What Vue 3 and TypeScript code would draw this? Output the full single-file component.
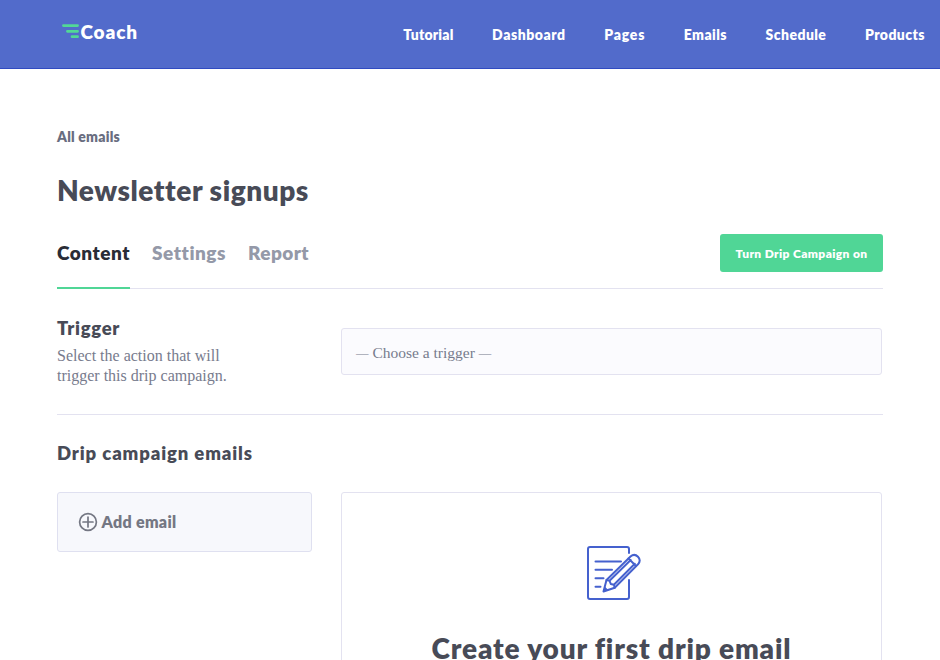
<script setup lang="ts">
import { ref } from 'vue'

interface Item {
  label: string
  key: string
}

const navItems: Item[] = [
  { label: 'Tutorial', key: 'tutorial' },
  { label: 'Dashboard', key: 'dashboard' },
  { label: 'Pages', key: 'pages' },
  { label: 'Emails', key: 'emails' },
  { label: 'Schedule', key: 'schedule' },
  { label: 'Products', key: 'products' },
]

const tabs: Item[] = [
  { label: 'Content', key: 'content' },
  { label: 'Settings', key: 'settings' },
  { label: 'Report', key: 'report' },
]

const activeTab = ref('content')
</script>

<template>
  <div class="page">
    <header class="header">
      <a class="logo">
        <svg class="logo-mark" width="17" height="15" viewBox="0 0 17 15">
          <path d="M1.4 1.6H15.6M5.4 7.3H15.6M10 12.7H15.6" />
        </svg>
        <span>Coach</span>
      </a>
      <nav class="nav">
        <a v-for="item in navItems" :key="item.key" class="nav-link" :class="'nav-' + item.key">{{ item.label }}</a>
      </nav>
    </header>

    <main class="main">
      <a class="back">All emails</a>
      <h1 class="title">Newsletter signups</h1>

      <div class="tab-row">
        <div class="tabs">
          <button
            v-for="tab in tabs"
            :key="tab.key"
            class="tab"
            :class="['tab-' + tab.key, { active: tab.key === activeTab }]"
            @click="activeTab = tab.key"
          >{{ tab.label }}</button>
        </div>
        <button class="cta">Turn Drip Campaign on</button>
      </div>

      <section class="trigger">
        <div class="trigger-info">
          <h2 class="heading trigger-heading">Trigger</h2>
          <p class="description">Select the action that will<br />trigger this drip campaign.</p>
        </div>
        <div class="select"><span class="dash">—</span> Choose a trigger <span class="dash">—</span></div>
      </section>

      <h2 class="heading emails-heading">Drip campaign emails</h2>

      <section class="emails">
        <button class="add">
          <svg width="20" height="20" viewBox="0 0 20 20">
            <circle cx="10" cy="10" r="8.4" />
            <path d="M10 5V15M5 10H15" />
          </svg>
          <span>Add email</span>
        </button>
        <div class="empty">
          <svg class="empty-icon" width="56" height="56" viewBox="0 0 56 56">
            <path d="M43 8V4Q43 2 41 2H4Q2 2 2 4V52Q2 54 4 54H41Q43 54 43 52V35" />
            <path d="M9.5 16.5H35M9.5 24.8H26M9.5 33.2H17.5M9.5 41.8H14.5" />
            <path d="M17.5 46.5L20.5 35L44.5 11.5Q48.5 8.1 52 11.8Q55.4 15.5 52 19.3L28.7 42.7L17.5 46.5Z" />
            <path d="M20.5 35L23.5 35.7L24.8 39L27.9 39.8L28.7 42.7M23.5 35.7L44.7 15M27.9 39.8L48.8 18.8M42.5 13.5L50 21" />
            <path class="tip" d="M17.5 46.5L18.7 41.6L22.4 45Z" />
          </svg>
          <h2 class="empty-title">Create your first drip email</h2>
        </div>
      </section>
    </main>
  </div>
</template>

<style>
body {
  margin: 0;
  overflow: hidden;
}
</style>

<style scoped>
.page {
  width: 940px;
  height: 660px;
  overflow: hidden;
  background: #fff;
  color: #484b57;
  font-family: Lato, sans-serif;
  font-weight: 800;
  font-variant-ligatures: none;
}
h1,
h2,
p {
  margin: 0;
}
button {
  font: inherit;
  font-variant-ligatures: none;
  border: 0;
  padding: 0;
  background: none;
}
span,
a,
h1,
h2,
p,
button {
  white-space: nowrap;
}
.header {
  box-sizing: border-box;
  height: 69px;
  padding: 0 15px 0 62px;
  display: flex;
  justify-content: space-between;
  background: #526bcb;
  border-bottom: 1px solid #304bc1;
  color: #fff;
}
.logo {
  display: flex;
  align-items: flex-start;
  gap: 1.5px;
  padding-top: 19px;
  font-size: 19px;
  line-height: 25px;
  letter-spacing: 0.85px;
}
.logo-mark {
  margin-top: 5px;
  fill: none;
  stroke: #52d896;
  stroke-width: 2.7;
  stroke-linecap: round;
}
.nav {
  display: flex;
  gap: 38.6px;
  padding-top: 26px;
  font-size: 14px;
  line-height: 18px;
  letter-spacing: 0.43px;
}
.nav-tutorial {
  letter-spacing: 0.2px;
}
.nav-dashboard {
  letter-spacing: 0.55px;
}
.nav-pages {
  letter-spacing: 0.75px;
}
.main {
  padding: 59px 57px 0;
}
.back {
  display: block;
  font-size: 14px;
  line-height: 18px;
  letter-spacing: 0.22px;
  color: #696d80;
}
.title {
  margin-top: 25px;
  font-size: 28px;
  line-height: 38px;
  font-weight: 800;
  letter-spacing: 0.55px;
}
.tab-row {
  display: flex;
  justify-content: space-between;
  margin-top: 25px;
  height: 54px;
  border-bottom: 1px solid #e3e2f0;
}
.tabs {
  display: flex;
  gap: 22px;
}
.tab {
  height: 55px;
  box-sizing: border-box;
  padding-bottom: 16px;
  font-size: 19px;
  line-height: 37px;
  letter-spacing: 0.52px;
  color: #9499a8;
  border-bottom: 2px solid transparent;
}
.tab-report {
  letter-spacing: 0.4px;
}
.tab.active {
  color: #292c36;
  border-bottom-color: #50d696;
}
.cta {
  width: 163px;
  height: 38px;
  border-radius: 3px;
  background: #50d696;
  color: #fff;
  font-size: 12px;
  letter-spacing: 0.36px;
}
.trigger {
  display: flex;
  height: 125px;
  border-bottom: 1px solid #e3e2f0;
}
.trigger-info {
  width: 284px;
  padding-top: 27px;
}
.heading {
  font-size: 18.5px;
  line-height: 24px;
  font-weight: 800;
  letter-spacing: 0.88px;
}
.trigger-heading {
  letter-spacing: 0.7px;
}
.description {
  margin-top: 6px;
  font-family: "Liberation Serif", serif;
  font-weight: 400;
  font-size: 16px;
  line-height: 20px;
  color: #777b8d;
}
.select {
  box-sizing: border-box;
  width: 541px;
  height: 47px;
  margin-top: 39px;
  padding-left: 14px;
  border: 1px solid #e3e2f0;
  border-radius: 3px;
  background: #fbfbfe;
  font-family: "Liberation Serif", serif;
  font-weight: 400;
  font-size: 15.5px;
  line-height: 47px;
  color: #777b8d;
}
.dash {
  font-size: 12.5px;
  line-height: 1;
  vertical-align: 1px;
}
.emails-heading {
  margin-top: 26px;
}
.emails {
  display: flex;
  align-items: flex-start;
  gap: 29px;
  margin-top: 27px;
}
.add {
  box-sizing: border-box;
  width: 255px;
  height: 60px;
  padding-left: 19.5px;
  display: flex;
  align-items: center;
  gap: 4px;
  border: 1px solid #dfe0f0;
  border-radius: 3px;
  background: #f7f8fc;
  color: #747783;
  font-size: 16px;
  letter-spacing: 0.3px;
}
.add span {
  padding-bottom: 1px;
}
.add svg {
  fill: none;
  stroke: #747783;
  stroke-width: 1.7;
  stroke-linecap: round;
}
.empty {
  box-sizing: border-box;
  width: 541px;
  height: 220px;
  padding-top: 52px;
  display: flex;
  flex-direction: column;
  align-items: center;
  border: 1px solid #e3e2f0;
  border-radius: 3px;
}
.empty-icon {
  margin-left: 4px;
  fill: none;
  stroke: #4561ce;
  stroke-width: 2;
  stroke-linecap: round;
  stroke-linejoin: round;
}
.empty-icon .tip {
  fill: #4561ce;
  stroke: none;
}
.empty-title {
  margin-top: 28px;
  font-size: 28px;
  line-height: 38px;
  font-weight: 800;
  letter-spacing: 0.85px;
}
</style>
